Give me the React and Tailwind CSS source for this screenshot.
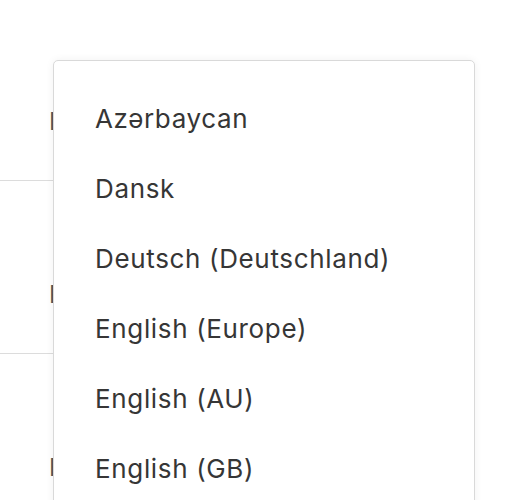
export default function App() {
  const items = [
    "Azərbaycan",
    "Dansk",
    "Deutsch (Deutschland)",
    "English (Europe)",
    "English (AU)",
    "English (GB)",
  ];
  const rows = ["Language", "Region", "Format"];
  return (
    <div className="relative w-[526px] h-[500px] overflow-hidden bg-white" style={{ fontFamily: "Inter, 'Noto Sans', sans-serif" }}>
      <div className="pt-2 w-[470px]">
        {rows.map((r, i) => (
          <div key={i} className="h-[173px] border-b border-[#dcdcdc] pl-[49px] pt-[96px] text-[24px] text-[#555]">
            {r}
          </div>
        ))}
      </div>
      <div className="absolute left-[53px] top-[60px] w-[422px] h-[480px] rounded-[5px] border-[1.5px] border-[#d9d9d9] bg-white shadow-[0_0_8px_rgba(0,0,0,0.06)]">
        <ul className="pt-[28px]">
          {items.map((t) => (
            <li key={t} className="h-[70px] pl-[41px] text-[26px] leading-[60px] text-[#363636] tracking-[0.65px]">
              {t}
            </li>
          ))}
        </ul>
      </div>
    </div>
  );
}
